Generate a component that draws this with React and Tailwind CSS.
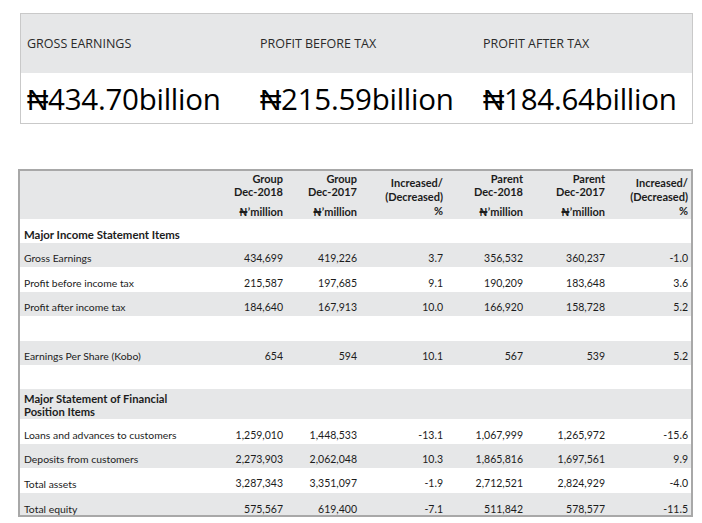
import React from "react";

const cols = "grid grid-cols-[190px_73px_74px_86px_80px_82px_83px_1fr]";

const rows = [
  { type: "section", label: "Major Income Statement Items", white: true },
  { label: "Gross Earnings", v: ["434,699", "419,226", "3.7", "356,532", "360,237", "-1.0"], white: false },
  { label: "Profit before income tax", v: ["215,587", "197,685", "9.1", "190,209", "183,648", "3.6"], white: true },
  { label: "Profit after income tax", v: ["184,640", "167,913", "10.0", "166,920", "158,728", "5.2"], white: false },
  { type: "empty", white: true },
  { label: "Earnings Per Share (Kobo)", v: ["654", "594", "10.1", "567", "539", "5.2"], white: false },
  { type: "empty", white: true },
  { type: "section2", white: false },
  { label: "Loans and advances to customers", v: ["1,259,010", "1,448,533", "-13.1", "1,067,999", "1,265,972", "-15.6"], white: true },
  { label: "Deposits from customers", v: ["2,273,903", "2,062,048", "10.3", "1,865,816", "1,697,561", "9.9"], white: false },
  { label: "Total assets", v: ["3,287,343", "3,351,097", "-1.9", "2,712,521", "2,824,929", "-4.0"], white: true },
  { label: "Total equity", v: ["575,567", "619,400", "-7.1", "511,842", "578,577", "-11.5"], white: false, last: true },
];

function GroupHead({ a, b }) {
  return (
    <div className="flex flex-col justify-between items-end text-right pt-[1px] pb-[1px] leading-[13px]">
      <div>
        <div>{a}</div>
        <div>{b}</div>
      </div>
      <div>₦’million</div>
    </div>
  );
}

function IncHead() {
  return (
    <div className="flex flex-col items-end text-right pt-[5px] leading-[14px]">
      <div>Increased/</div>
      <div>(Decreased)</div>
      <div>%</div>
    </div>
  );
}

export default function App() {
  return (
    <div className="w-[702px] h-[523px] bg-white relative overflow-hidden font-['Lato',sans-serif] text-[#1c1c1c]">
      <div className="ml-[20px] mt-[13px] w-[673px] border border-[#c9c9c9] font-['Open_Sans',sans-serif]">
        <div className="grid grid-cols-[233px_222px_1fr] bg-[#e6e7e8] h-[59px] items-center text-[12.5px] text-[#2a2a2a]">
          <div className="pl-[6px] pt-[2px]">GROSS EARNINGS</div>
          <div className="pl-[6px] pt-[2px]">PROFIT BEFORE TAX</div>
          <div className="pl-[7px] pt-[2px]">PROFIT AFTER TAX</div>
        </div>
        <div className="grid grid-cols-[233px_222px_1fr] h-[50px] items-center text-[29.5px] text-black tracking-[-0.25px]">
          <div className="pl-[6px] pt-[2px]">₦434.70billion</div>
          <div className="pl-[6px] pt-[2px]">₦215.59billion</div>
          <div className="pl-[7px] pt-[2px]">₦184.64billion</div>
        </div>
      </div>

      <div className="ml-[18px] mt-[45px] w-[675px] border-2 border-[#a8a8a8]">
        <div className={`${cols} bg-[#e6e7e8] h-[48px] text-[11px] font-bold`}>
          <div></div>
          <GroupHead a="Group" b="Dec-2018" />
          <GroupHead a="Group" b="Dec-2017" />
          <IncHead />
          <GroupHead a="Parent" b="Dec-2018" />
          <GroupHead a="Parent" b="Dec-2017" />
          <IncHead />
          <div></div>
        </div>
        {rows.map((r, i) => {
          const bg = r.white ? "bg-white" : "bg-[#e6e7e8]";
          if (r.type === "section") {
            return (
              <div key={i} className={`${bg} h-[24px] flex items-center pl-[4px] pt-[8px] text-[11.4px] font-bold`}>
                {r.label}
              </div>
            );
          }
          if (r.type === "section2") {
            return (
              <div key={i} className={`${bg} h-[30px] flex flex-col justify-center pl-[4px] pt-[1px] text-[11.2px] font-bold leading-[13px]`}>
                <div>Major Statement of Financial</div>
                <div>Position Items</div>
              </div>
            );
          }
          if (r.type === "empty") {
            return <div key={i} className={`${bg} h-[24.4px]`} />;
          }
          return (
            <div
              key={i}
              className={`${cols} ${bg} ${r.last ? "h-[22px] pt-[9px]" : "h-[24.4px] pt-[8px]"} items-center text-[10.5px]`}
            >
              <div className="pl-[4px] text-[10.4px]">{r.label}</div>
              {r.v.map((x, j) => (
                <div key={j} className="text-right">{x}</div>
              ))}
              <div></div>
            </div>
          );
        })}
      </div>
    </div>
  );
}
